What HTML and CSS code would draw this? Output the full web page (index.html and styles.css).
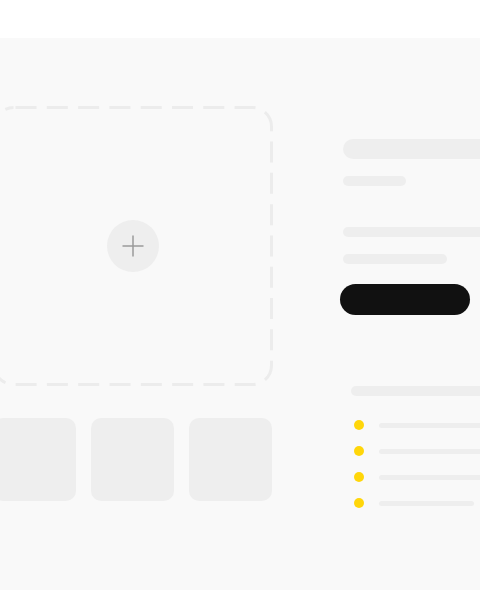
FILE: index.html
```html
<!DOCTYPE html>
<html lang="en">
<head>
<meta charset="utf-8">
<title>Product skeleton</title>
<link rel="stylesheet" href="styles.css">
</head>
<body>
<div class="topbar"></div>
<section class="stage">
  <div class="layout">
    <div class="media">
      <div class="dropzone">
        <svg class="dash" viewBox="0 0 280 280" width="280" height="280" aria-hidden="true">
          <rect x="1.5" y="1.5" width="277" height="277" rx="19" ry="19" fill="none" stroke="#ececec" stroke-width="3" stroke-dasharray="21 10.3" stroke-dashoffset="-2"/>
        </svg>
        <div class="add">
          <svg viewBox="0 0 22 22" width="22" height="22" aria-hidden="true">
            <path d="M11 0.5V21.5M0.5 11H21.5" stroke="#9a9a9a" stroke-width="1.5" fill="none"/>
          </svg>
        </div>
      </div>
      <div class="thumbs">
        <div class="thumb"></div>
        <div class="thumb"></div>
        <div class="thumb"></div>
      </div>
    </div>
    <div class="info">
      <div class="sk sk-title"></div>
      <div class="sk sk-sub"></div>
      <div class="sk sk-line1"></div>
      <div class="sk sk-line2"></div>
      <div class="btn"></div>
      <div class="features">
        <div class="sk sk-head"></div>
        <ul class="list">
          <li class="item"><span class="dot"></span><span class="ln"></span></li>
          <li class="item"><span class="dot"></span><span class="ln"></span></li>
          <li class="item"><span class="dot"></span><span class="ln"></span></li>
          <li class="item"><span class="dot"></span><span class="ln ln-short"></span></li>
        </ul>
      </div>
    </div>
  </div>
</section>
</body>
</html>
```
FILE: styles.css
```css
html, body {
  margin: 0;
  padding: 0;
  background: #ffffff;
  overflow: hidden;
  font-family: "Liberation Sans", Arial, sans-serif;
}

.topbar {
  height: 38px;
}

.stage {
  height: 552px;
  background: #f9f9f9;
  box-sizing: border-box;
  padding-top: 68px;
  overflow: hidden;
}

.layout {
  display: flex;
  margin-left: -7px;
  width: 620px;
}

.media {
  width: 280px;
  flex: none;
  display: flex;
  flex-direction: column;
  gap: 32px;
}

.dropzone {
  position: relative;
  width: 280px;
  height: 280px;
  display: flex;
  align-items: center;
  justify-content: center;
}

.dash {
  position: absolute;
  left: 0;
  top: 0;
}

.add {
  width: 52px;
  height: 52px;
  border-radius: 50%;
  background: #eeeeee;
  display: flex;
  align-items: center;
  justify-content: center;
}

.add svg {
  display: block;
}

.thumbs {
  display: flex;
  gap: 15px;
}

.thumb {
  width: 83px;
  height: 83px;
  border-radius: 10px;
  background: #eeeeee;
}

.info {
  margin-left: 67px;
  width: 220px;
  flex: none;
  display: flex;
  flex-direction: column;
}

.sk {
  background: #eeeeee;
  border-radius: 10px;
  margin-left: 3px;
}

.sk-title {
  height: 20px;
  width: 210px;
  margin-top: 33px;
}

.sk-sub {
  height: 10px;
  width: 63px;
  margin-top: 17px;
}

.sk-line1 {
  height: 10px;
  width: 210px;
  margin-top: 41px;
}

.sk-line2 {
  height: 10px;
  width: 104px;
  margin-top: 17px;
}

.btn {
  width: 130px;
  height: 31px;
  border-radius: 16px;
  background: #111111;
  margin-top: 20px;
}

.features {
  margin-top: 71px;
  margin-left: 11px;
}

.sk-head {
  margin-left: 0;
  height: 10px;
  width: 200px;
}

.list {
  list-style: none;
  margin: 24px 0 0 0;
  padding: 0;
  display: flex;
  flex-direction: column;
  gap: 16px;
}

.item {
  display: flex;
  align-items: center;
  height: 10px;
}

.dot {
  width: 10.5px;
  height: 10.5px;
  border-radius: 50%;
  background: #ffd60a;
  margin-left: 2.5px;
  flex: none;
}

.ln {
  margin-left: 15px;
  height: 5px;
  width: 200px;
  border-radius: 3px;
  background: #eeeeee;
}

.ln-short {
  width: 95px;
}
```
